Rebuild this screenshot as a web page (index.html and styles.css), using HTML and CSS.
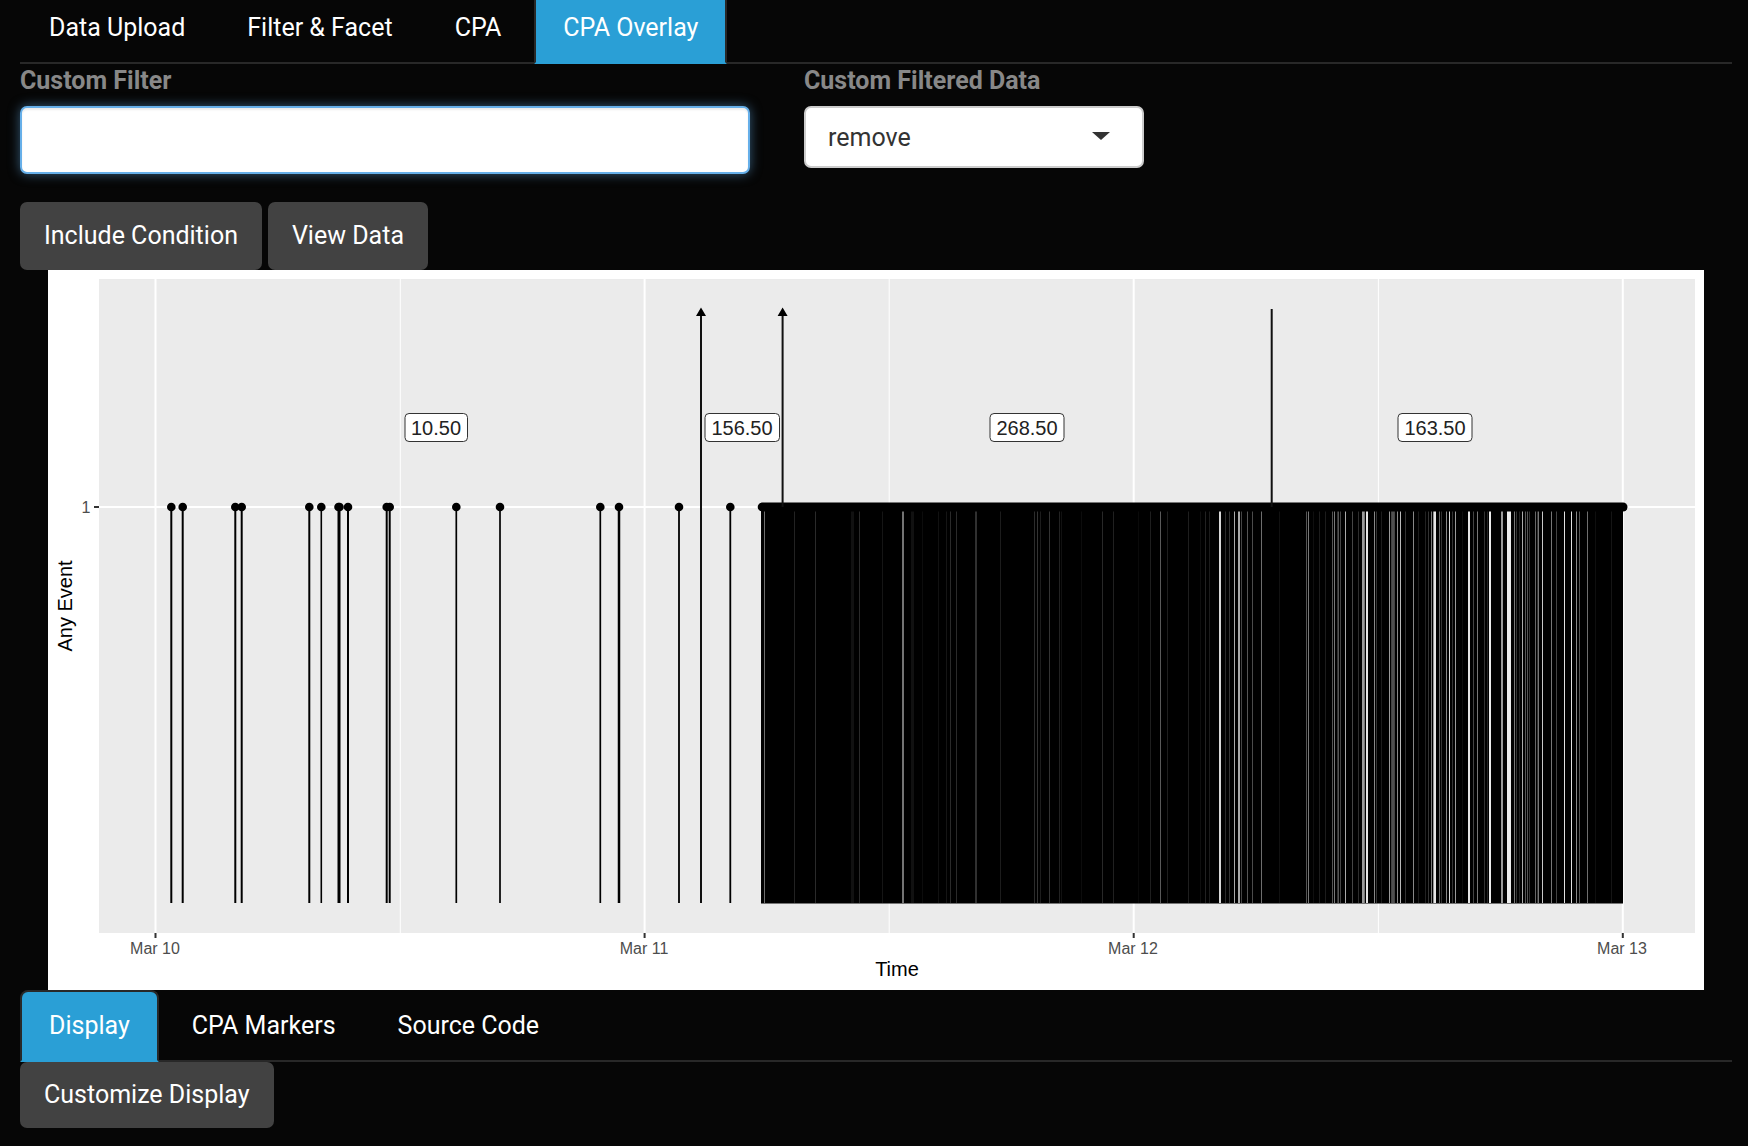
FILE: index.html
```html
<!DOCTYPE html>
<html lang="en">
<head>
<meta charset="utf-8">
<meta name="viewport" content="width=device-width, initial-scale=1">
<title>CPA Overlay</title>
<link rel="stylesheet" href="styles.css">
</head>
<body>
<main class="page">
  <nav class="tabs tabs-main" aria-label="Sections">
    <a class="tab" href="#upload">Data Upload</a>
    <a class="tab" href="#facet">Filter &amp; Facet</a>
    <a class="tab" href="#cpa">CPA</a>
    <a class="tab active" href="#overlay" aria-current="page">CPA Overlay</a>
  </nav>

  <form class="filters">
    <div class="field">
      <label for="custom-filter">Custom Filter</label>
      <input class="text-input" id="custom-filter" type="text">
    </div>
    <div class="field">
      <label for="filtered-data">Custom Filtered Data</label>
      <div class="select-wrap">
        <select class="select" id="filtered-data">
          <option>remove</option>
          <option>keep</option>
        </select>
        <svg class="caret" viewBox="0 0 18 8" aria-hidden="true"><path d="M0 0H18L9 8Z"/></svg>
      </div>
    </div>
  </form>

  <div class="actions">
    <button class="btn" type="button">Include Condition</button>
    <button class="btn" type="button">View Data</button>
  </div>

  <figure class="plot">
    <svg viewBox="48 270 1656 720" role="img" aria-label="Any Event over Time">
      <rect class="panel" x="99" y="279" width="1596" height="654"/>
      <path class="grid-minor" d="M400.3 279V933M889.2 279V933M1378.4 279V933"/>
      <path class="grid-major" d="M155.5 279V933M644.6 279V933M1133.7 279V933M1622.8 279V933M99 507H1695"/>
      <path class="tick" d="M155.5 933v5M644.6 933v5M1133.7 933v5M1622.8 933v5M94 507h5"/>
      <g id="events"></g>
      <path class="marker" d="M701 314V903M782.6 314V507M1271.7 309V507"/>
      <path d="M701 307.500L706 316H696ZM782.6 307.500L787.6 316H777.6Z"/>
      <g class="value">
        <rect x="405" y="413.500" width="62.500" height="28" rx="4"/><text x="436" y="435">10.50</text>
        <rect x="705" y="413.500" width="74.500" height="28" rx="4"/><text x="742" y="435">156.50</text>
        <rect x="990" y="413.500" width="74" height="28" rx="4"/><text x="1027" y="435">268.50</text>
        <rect x="1398" y="413.500" width="74" height="28" rx="4"/><text x="1435" y="435">163.50</text>
      </g>
      <g class="tick-label">
        <text x="155" y="954">Mar 10</text>
        <text x="644" y="954">Mar 11</text>
        <text x="1133" y="954">Mar 12</text>
        <text x="1622" y="954">Mar 13</text>
        <text x="86" y="513">1</text>
      </g>
      <g class="axis-title">
        <text x="897" y="976">Time</text>
        <text transform="translate(72 606) rotate(-90)">Any Event</text>
      </g>
    </svg>
  </figure>

  <nav class="tabs" aria-label="Plot options">
    <a class="tab active" href="#display" aria-current="page">Display</a>
    <a class="tab" href="#markers">CPA Markers</a>
    <a class="tab" href="#source">Source Code</a>
  </nav>
  <button class="btn" type="button">Customize Display</button>
</main>
<script src="plot.js"></script>
</body>
</html>
```

FILE: plot.js
```js
// Single events before the dense stretch: [x, line width]
const events = [[171.3, 2], [182.7, 2], [235.3, 2], [241.7, 2], [309.3, 2], [321.3, 1.6],
  [338.5, 2], [339.5, 2], [348, 2], [386.7, 2], [389.7, 2], [456.3, 1.7], [500, 1.7],
  [600.3, 1.7], [619, 2.5], [679, 1.8], [730.3, 1.8], [762, 2]];

// Dense stretch: gaps between events, [x, grey level, width]
const gaps = [[764, 110], [794, 34], [815.3, 42], [852, 17, 3], [859, 42], [882, 21], [903.4, 115, 2],
  [912.5, 17, 3], [922, 12], [938, 17], [946, 21], [950, 42], [956, 42], [976, 48, 2], [1000, 28],
  [1034, 44], [1037, 51], [1040.7, 28], [1049, 51], [1059, 34], [1061, 17], [1081.7, 12],
  [1102, 40], [1113.7, 32], [1138, 10], [1150, 30], [1160.7, 90], [1167.7, 30], [1188, 30],
  [1200, 15], [1205, 34], [1209.7, 28], [1220.3, 215, 2], [1225.7, 42], [1229, 51], [1234.7, 170],
  [1239, 170, 2], [1241.7, 68], [1247.7, 85], [1252.7, 75], [1261, 110], [1279, 17], [1306, 85],
  [1308.7, 120], [1313.7, 15], [1319.7, 28], [1325.3, 28], [1332.3, 85], [1334.7, 120], [1337, 51],
  [1338.7, 85], [1340.7, 68], [1345.7, 170], [1352.7, 70], [1358, 45], [1362.7, 155, 2],
  [1364.7, 119], [1366.7, 230, 2], [1374.7, 136], [1376.7, 51], [1381.7, 28], [1389, 153],
  [1391, 68], [1393, 80, 2], [1394.7, 68], [1397.3, 136], [1400.3, 187], [1405, 51], [1413.3, 136],
  [1418.7, 28], [1425.7, 34], [1428.7, 51], [1431.7, 119], [1433, 150], [1435.3, 230, 2],
  [1439.7, 102], [1441.7, 51], [1446.7, 136], [1449.7, 220], [1452, 51], [1455.7, 153], [1462, 15],
  [1469, 230, 2], [1473.7, 68], [1477.5, 119], [1484.3, 51], [1487, 34], [1490, 235, 2],
  [1501.7, 153, 2], [1509, 235, 4], [1514.3, 119], [1516.3, 51], [1519, 34], [1522.3, 170],
  [1525.3, 85], [1527.3, 85], [1529.3, 51], [1535, 102], [1537, 51], [1538.7, 119], [1542.3, 200],
  [1551.7, 119], [1556.3, 68], [1564.3, 225], [1571.7, 225], [1576.7, 136], [1579.3, 85],
  [1587.3, 110], [1595.7, 15], [1611.7, 21]];

const lineTop = 507;
const lineBase = 903;

const eventMarks = events.map(([x, w]) =>
  `<path class="event" stroke-width="${w}" d="M${x} ${lineTop}V${lineBase}"/>` +
  `<circle cx="${x}" cy="${lineTop}" r="4.3"/>`);

// Odd widths are centred on a half pixel and even ones on a whole pixel, so gaps stay crisp
const gapMarks = gaps.map(([x, g, w = 1]) => {
  const cx = w % 2 ? Math.floor(x) + 0.5 : Math.round(x);
  return `<path stroke="rgb(${g},${g},${g})" stroke-width="${w}" d="M${cx} 511V${lineBase}"/>`;
});

document.getElementById('events').innerHTML =
  '<rect x="761" y="507" width="862" height="396.5"/>' + gapMarks.join('') +
  '<path class="cap" d="M763 507H1623"/>' + eventMarks.join('');
```

FILE: styles.css
```css
* { box-sizing: border-box; }

body {
  margin: 0;
  background: #060606;
  color: #fff;
  font: 25px/34px Roboto, sans-serif;
}

.page { padding: 0 16px 18px 20px; overflow: hidden; }

.tabs {
  display: flex;
  gap: 4px;
  border-bottom: 2px solid #282828;
}
.tabs-main { margin-top: -8px; }

.tab {
  margin-bottom: -2px;
  padding: 17px 27px;
  border: 2px solid transparent;
  border-radius: 8px 8px 0 0;
  color: #fff;
  text-decoration: none;
}
.tab.active {
  background: #2a9fd6;
  border-color: #282828 #282828 #2a9fd6;
}

.filters {
  display: grid;
  grid-template-columns: 730fr 340px 534fr;
  gap: 54px;
  align-items: start;
}
.field { display: grid; gap: 8px; }
.field label { color: #888; font-weight: 700; }

.text-input, .select {
  width: 100%;
  padding: 0 22px;
  border: 2px solid #ccc;
  border-radius: 7px;
  background: #fff;
  color: #333;
  font: inherit;
}
.text-input {
  height: 68px;
  border-color: #66afe9;
  box-shadow: inset 0 2px 2px rgba(0, 0, 0, .075), 0 0 12px rgba(102, 175, 233, .5);
}
.select-wrap { position: relative; }
.select { display: block; height: 62px; padding-top: 2px; appearance: none; }
.caret {
  position: absolute;
  top: 26px;
  right: 34px;
  width: 18px;
  height: 8px;
  fill: #333;
  pointer-events: none;
}

.actions { display: flex; gap: 6px; margin-top: 28px; }

.btn {
  display: block;
  padding: 16px 24px;
  border: 0;
  border-radius: 7px;
  background: #424242;
  color: #fff;
  font: inherit;
}
.actions .btn { padding-block: 17px; }

.plot { margin: 0 28px; background: #fff; }
.plot svg {
  display: block;
  width: 100%;
  height: auto;
  font-family: "Liberation Sans", Arial, sans-serif;
  text-anchor: middle;
}
.panel { fill: #ebebeb; }
.grid-major { stroke: #fff; stroke-width: 2; }
.grid-minor { stroke: #fff; stroke-width: 1; }
.tick { stroke: #333; stroke-width: 2; }
.event { stroke: #000; }
.marker { stroke: #111; stroke-width: 2; }
.cap { stroke: #000; stroke-width: 9; stroke-linecap: round; }
.value rect { fill: #fff; stroke: #333; stroke-width: 1; }
.value text { fill: #222; font-size: 20px; }
.tick-label { fill: #4d4d4d; font-size: 16px; }
.axis-title { fill: #000; font-size: 20px; }
```
